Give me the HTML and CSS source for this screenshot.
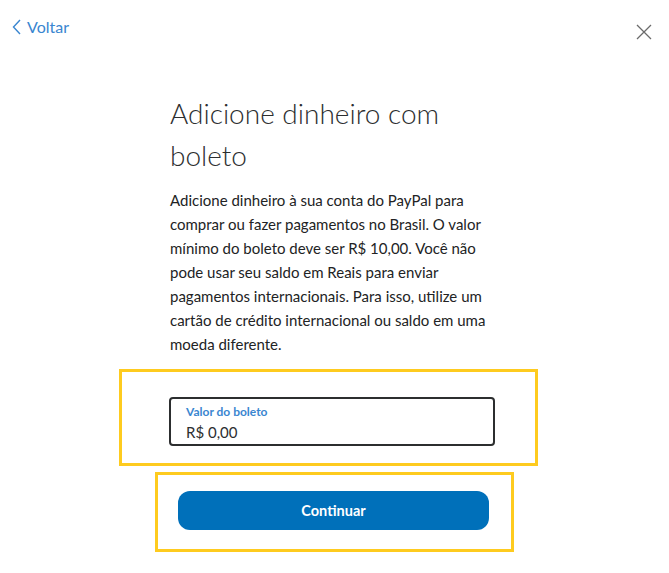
FILE: index.html
```html
<!DOCTYPE html>
<html lang="pt-BR">
<head>
    <meta charset="UTF-8">
    <meta name="viewport" content="width=device-width, initial-scale=1.0">
    <title>Adicione dinheiro com boleto</title>
    <link rel="stylesheet" href="styles.css">
</head>
<body>

    <header class="top-bar">
        <a class="back-link" href="#">
            <svg class="back-icon" width="9" height="16" viewBox="0 0 9 16">
                <path d="M8 1 L1.5 8 L8 15" fill="none" stroke="#3a86d0" stroke-width="1.4"/>
            </svg>
            Voltar
        </a>
        <button class="close-btn" type="button" aria-label="Fechar">
            <svg width="16" height="16" viewBox="0 0 16 16">
                <path d="M1 1 L15 15 M15 1 L1 15" stroke="#6b6b6b" stroke-width="1.3"/>
            </svg>
        </button>
    </header>

    <main class="content">
        <h1 class="title">Adicione dinheiro com boleto</h1>
        <p class="intro">Adicione dinheiro à sua conta do PayPal para comprar ou fazer pagamentos no Brasil. O valor mínimo do boleto deve ser R$ 10,00. Você não pode usar seu saldo em Reais para enviar pagamentos internacionais. Para isso, utilize um cartão de crédito internacional ou saldo em uma moeda diferente.</p>
    </main>

    <div class="highlight highlight-field">
        <label class="amount-field" for="amount">
            <span class="amount-label">Valor do boleto</span>
            <input id="amount" class="amount-input" type="text" value="R$ 0,00">
        </label>
    </div>

    <div class="highlight highlight-button">
        <button class="continue-btn" type="button">Continuar</button>
    </div>

</body>
</html>
```

FILE: styles.css
```css
body {
    margin: 0;
    font-family: 'Lato', 'Liberation Sans', sans-serif;
    background-color: #ffffff;
    color: #2c2e2f;
}

.top-bar {
    display: flex;
    justify-content: space-between;
    align-items: flex-start;
    padding: 19px 17px 0 12px;
    height: 73px;
    box-sizing: border-box;
}

.back-link {
    display: flex;
    align-items: center;
    gap: 6px;
    color: #3a86d0;
    text-decoration: none;
    font-size: 16px;
    line-height: 16px;
}

.close-btn {
    background: transparent;
    border: none;
    padding: 0;
    margin-top: 5px;
    cursor: pointer;
}

.content {
    margin-left: 170px;
    width: 335px;
}

.title {
    margin: 19px 0 0;
    font-size: 28px;
    font-weight: 300;
    line-height: 42px;
    color: #2c2e2f;
}

.intro {
    margin: 12px 0 0;
    font-size: 15px;
    line-height: 24px;
    color: #222324;
}

.highlight {
    border: 3px solid #fecb1f;
    box-sizing: border-box;
}

.highlight-field {
    margin: 13px 0 0 119px;
    width: 419px;
    padding: 25px 40px 17px 47px;
}

.amount-field {
    display: block;
    border: 2px solid #2c2e2f;
    border-radius: 4px;
    padding: 6px 14px 6px 15px;
    height: 49px;
    box-sizing: border-box;
}

.amount-label {
    display: block;
    font-size: 12px;
    font-weight: 700;
    line-height: 14px;
    color: #3a86d0;
}

.amount-input {
    border: none;
    padding: 0;
    margin: 4px 0 0;
    width: 100%;
    font-family: inherit;
    font-size: 15px;
    line-height: 18px;
    color: #2c2e2f;
    outline: none;
}

.highlight-button {
    margin: 6px 0 0 155px;
    width: 359px;
    height: 80px;
    padding: 16px 22px 0 20px;
}

.continue-btn {
    display: block;
    width: 100%;
    height: 39px;
    border: none;
    border-radius: 12px;
    background-color: #0070ba;
    color: #ffffff;
    font-family: inherit;
    font-size: 14.5px;
    font-weight: 700;
    cursor: pointer;
}
```
